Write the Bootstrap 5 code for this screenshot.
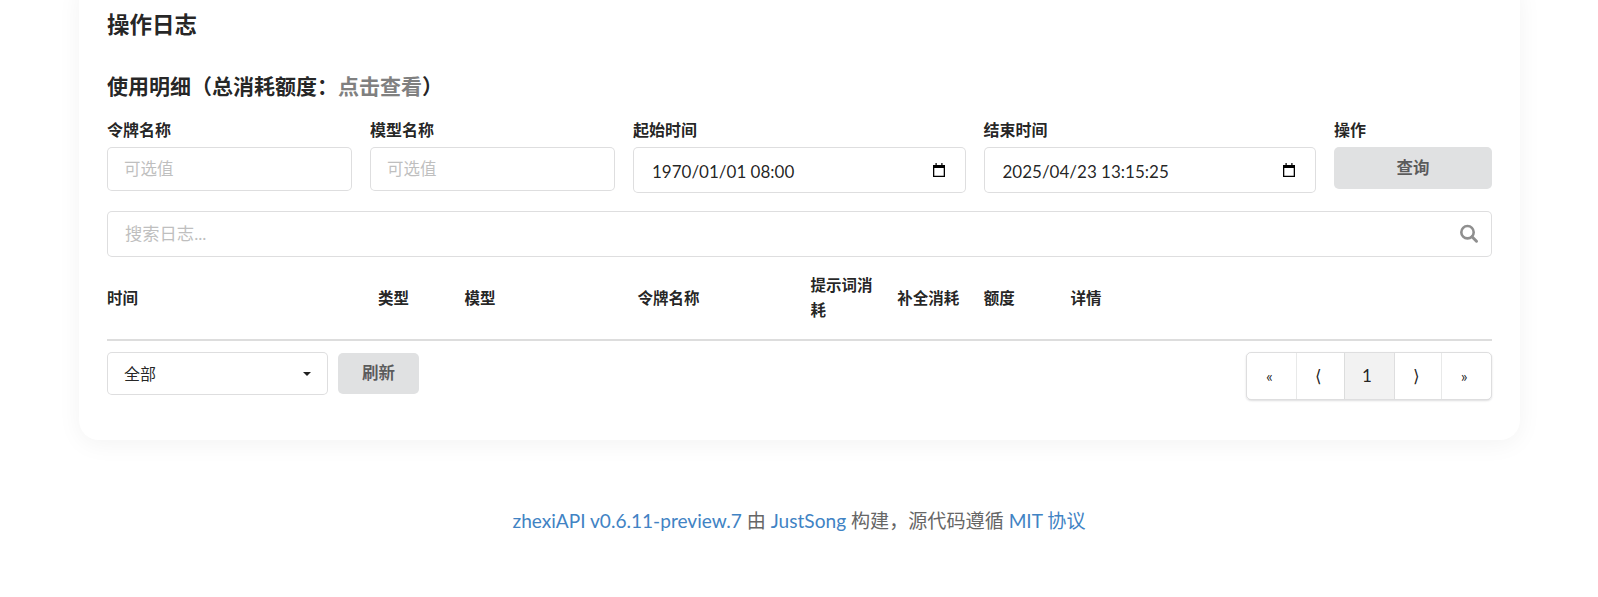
<!DOCTYPE html>
<html lang="zh-CN">
<head>
  <meta charset="UTF-8" />
  <title>操作日志</title>
  <link href="https://cdn.jsdelivr.net/npm/bootstrap@5.3.2/dist/css/bootstrap.min.css" rel="stylesheet" />
  <style>
    html, body {
      height: 597px;
      overflow: hidden;
    }
    body {
      background-color: #fff;
      color: rgba(0, 0, 0, .87);
      font-family: Lato, "Noto Sans CJK SC", sans-serif;
      font-size: 16px;
    }
    a {
      color: #4183c4;
      text-decoration: none;
    }
    .log-card {
      width: 1441px;
      height: 460px;
      margin: -20px 0 0 79px;
      padding: 31px 28px 0;
      border-radius: 20px;
      background: #fff;
      box-shadow: 0 4px 24px rgba(0, 0, 0, .05);
    }
    .log-title {
      font-size: 22.5px;
      font-weight: 700;
      line-height: 1.2;
      margin: 0;
    }
    .usage-title {
      font-size: 21px;
      font-weight: 700;
      line-height: 1.2;
      margin: 35px 0 0;
    }
    .usage-title a {
      color: #808080;
    }
    .filter-grid {
      display: grid;
      grid-template-columns: 245px 245px 332.5px 332.5px 158px;
      gap: 18px;
      margin-top: 23px;
    }
    .filter-label {
      display: block;
      font-size: 16px;
      font-weight: 700;
      line-height: 18px;
      margin-bottom: 8px;
    }
    .log-input {
      width: 100%;
      height: 44px;
      padding: 0 16px;
      border: 1px solid rgba(34, 36, 38, .15);
      border-radius: 5px;
      font-size: 16.5px;
      color: rgba(0, 0, 0, .87);
      outline: 0;
    }
    .log-input::placeholder {
      color: #bfbfbf;
    }
    .date-wrap {
      position: relative;
    }
    .date-wrap .log-input {
      height: 46px;
      padding: 2px 0 0 18px;
      font-size: 17px;
    }
    .date-wrap svg {
      position: absolute;
      right: 21px;
      top: 16px;
    }
    .gray-btn {
      background: #e0e1e2;
      border: 0;
      border-radius: 5px;
      color: rgba(0, 0, 0, .6);
      font-size: 16.5px;
      font-weight: 700;
    }
    .query-btn {
      width: 100%;
      height: 42px;
    }
    .search-wrap {
      position: relative;
      margin-top: 18px;
    }
    .search-wrap .log-input {
      height: 46px;
      padding: 0 0 2px 17px;
      font-size: 17.3px;
    }
    .search-wrap svg {
      position: absolute;
      right: 13px;
      top: 13px;
    }
    .log-table {
      width: 100%;
      table-layout: fixed;
      margin-top: 11px;
      border-bottom: 2px solid #ddd;
    }
    .log-table th {
      height: 72px;
      padding: 0 14px 11px 0;
      font-size: 15.5px;
      font-weight: 700;
      line-height: 25px;
    }
    .w-time { width: 271px; }
    .w-narrow { width: 86.6px; }
    .w-mid { width: 173px; }
    .bottom-row {
      margin-top: 11px;
    }
    .left-tools {
      gap: 10px;
    }
    .refresh-btn {
      width: 81px;
      height: 41px;
    }
    .type-picker {
      width: 221px;
      height: 43px;
      padding: 0 16px 0 16px;
      background: #fff;
      border: 1px solid rgba(34, 36, 38, .15);
      border-radius: 5px;
      font-size: 16px;
      color: rgba(0, 0, 0, .87);
    }
    .log-pager {
      height: 48px;
      margin: 0;
      border: 1px solid rgba(34, 36, 38, .15);
      border-radius: 5px;
      box-shadow: 0 1px 2px rgba(34, 36, 38, .15);
    }
    .log-pager .page-link {
      display: flex;
      align-items: center;
      justify-content: center;
      width: 49.6px;
      height: 46px;
      padding: 0 5px 0 0;
      margin: 0;
      border: 0;
      border-left: 1px solid rgba(34, 36, 38, .1);
      border-radius: 0;
      background: transparent;
      color: rgba(0, 0, 0, .87);
      font-size: 16px;
    }
    .log-pager .page-item:first-child .page-link {
      border-left: 0;
    }
    .log-pager .arrow-link {
      font-size: 17px;
    }
    .log-pager .active .page-link {
      background: #f2f2f2;
      color: rgba(0, 0, 0, .87);
      font-size: 17px;
    }
    .log-pager .active + .page-item .page-link {
      border-left: 2px solid rgba(34, 36, 38, .15);
    }
    .log-footer {
      margin-top: 68px;
      text-align: center;
      font-size: 19.1px;
      line-height: 26px;
      color: #666;
    }
  </style>
</head>
<body>
  <div class="log-card">
    <h1 class="log-title">操作日志</h1>
    <h2 class="usage-title">使用明细（总消耗额度：<a href="#">点击查看</a>）</h2>

    <!-- Filters -->
    <div class="filter-grid">
      <div>
        <label class="filter-label">令牌名称</label>
        <input type="text" class="log-input" placeholder="可选值" />
      </div>
      <div>
        <label class="filter-label">模型名称</label>
        <input type="text" class="log-input" placeholder="可选值" />
      </div>
      <div>
        <label class="filter-label">起始时间</label>
        <div class="date-wrap">
          <input type="text" class="log-input" value="1970/01/01 08:00" />
          <svg width="12" height="14" viewBox="0 0 12 14"><path d="M0 2h12v12H0zM1.3 5v7.7h9.4V5z" fill="#000" fill-rule="evenodd"/><path d="M2.5 0h1.2v2H2.5zM8.3 0h1.2v2H8.3z" fill="#000"/></svg>
        </div>
      </div>
      <div>
        <label class="filter-label">结束时间</label>
        <div class="date-wrap">
          <input type="text" class="log-input" value="2025/04/23 13:15:25" />
          <svg width="12" height="14" viewBox="0 0 12 14"><path d="M0 2h12v12H0zM1.3 5v7.7h9.4V5z" fill="#000" fill-rule="evenodd"/><path d="M2.5 0h1.2v2H2.5zM8.3 0h1.2v2H8.3z" fill="#000"/></svg>
        </div>
      </div>
      <div>
        <label class="filter-label">操作</label>
        <button class="gray-btn query-btn">查询</button>
      </div>
    </div>

    <!-- Search -->
    <div class="search-wrap">
      <input type="text" class="log-input" placeholder="搜索日志..." />
      <svg width="20" height="20" viewBox="0 0 20 20"><circle cx="8.5" cy="8.2" r="6.2" fill="none" stroke="#8f8f8f" stroke-width="2.6"/><path d="M13 12.7l4.5 4.5" stroke="#8f8f8f" stroke-width="3" stroke-linecap="round"/></svg>
    </div>

    <!-- Table -->
    <table class="log-table">
      <thead>
        <tr>
          <th class="w-time">时间</th>
          <th class="w-narrow">类型</th>
          <th class="w-mid">模型</th>
          <th class="w-mid">令牌名称</th>
          <th class="w-narrow">提示词消耗</th>
          <th class="w-narrow">补全消耗</th>
          <th class="w-narrow">额度</th>
          <th>详情</th>
        </tr>
      </thead>
    </table>

    <div class="bottom-row d-flex justify-content-between align-items-start">
      <div class="left-tools d-flex align-items-center">
        <div class="dropdown">
          <button class="type-picker dropdown-toggle d-flex align-items-center justify-content-between" type="button" data-bs-toggle="dropdown">全部</button>
        </div>
        <button class="gray-btn refresh-btn">刷新</button>
      </div>
      <nav>
        <ul class="pagination log-pager">
          <li class="page-item"><a class="page-link" href="#">«</a></li>
          <li class="page-item"><a class="page-link arrow-link" href="#">⟨</a></li>
          <li class="page-item active"><a class="page-link" href="#">1</a></li>
          <li class="page-item"><a class="page-link arrow-link" href="#">⟩</a></li>
          <li class="page-item"><a class="page-link" href="#">»</a></li>
        </ul>
      </nav>
    </div>
  </div>

  <div class="log-footer">
    <a href="#">zhexiAPI v0.6.11-preview.7</a> 由 <a href="#">JustSong</a> 构建，源代码遵循 <a href="#">MIT 协议</a>
  </div>

  <script src="https://cdn.jsdelivr.net/npm/bootstrap@5.3.2/dist/js/bootstrap.bundle.min.js"></script>
</body>
</html>
